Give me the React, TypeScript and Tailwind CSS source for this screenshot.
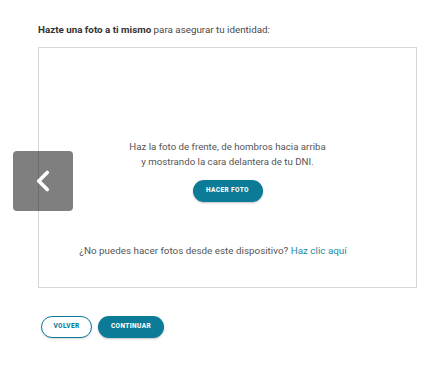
import { ChevronLeft } from 'lucide-react';

export default function App() {
  return (
    <div
      className="relative h-[392px] w-[436px] bg-white text-[#555]"
      style={{ fontFamily: 'Roboto, "Liberation Sans", sans-serif' }}
    >
      <div className="pl-[38px] pr-[19px] pt-[23px]">
        <p className="text-[9.8px] leading-[14px] text-[#4a4a4a]">
          <span className="font-bold text-[#333]">Hazte una foto a ti mismo</span> para asegurar tu identidad:
        </p>

        <div className="mt-[10px] flex h-[241px] w-[379px] flex-col items-center border border-[#d6d6d6] pt-[91px]">
          <p className="text-center text-[9.7px] leading-[15px] text-[#555]">
            Haz la foto de frente, de hombros hacia arriba
            <br />y mostrando la cara delantera de tu DNI.
          </p>
          <button className="mt-[11px] flex h-[22px] w-[70px] items-center justify-center rounded-full bg-[#0b7b98] text-[6.5px] font-extrabold tracking-[0.06em] text-white shadow-[0_1px_2px_rgba(0,0,0,0.25)]">
            HACER FOTO
          </button>
          <p className="mr-[29px] mt-[42px] text-[9.85px] leading-[14px] text-[#555]">
            ¿No puedes hacer fotos desde este dispositivo?{' '}
            <span className="text-[#1b8aa6]">Haz clic aquí</span>
          </p>
        </div>

        <div className="mt-[28px] flex gap-[6px] pl-[3px]">
          <button className="flex h-[22px] w-[51px] items-center justify-center rounded-full border border-[#0b7b98] bg-white text-[6.5px] font-extrabold tracking-[0.06em] text-[#0b7b98] shadow-[0_1px_2px_rgba(0,0,0,0.15)]">
            VOLVER
          </button>
          <button className="flex h-[22px] w-[66px] items-center justify-center rounded-full bg-[#0b7b98] text-[6.5px] font-extrabold tracking-[0.06em] text-white shadow-[0_1px_2px_rgba(0,0,0,0.25)]">
            CONTINUAR
          </button>
        </div>
      </div>

      <div className="absolute left-[13px] top-[151px] flex h-[60px] w-[60px] items-center justify-center rounded-[4px] bg-black/50">
        <ChevronLeft className="h-[34px] w-[34px] text-white" strokeWidth={2.6} />
      </div>
    </div>
  );
}
